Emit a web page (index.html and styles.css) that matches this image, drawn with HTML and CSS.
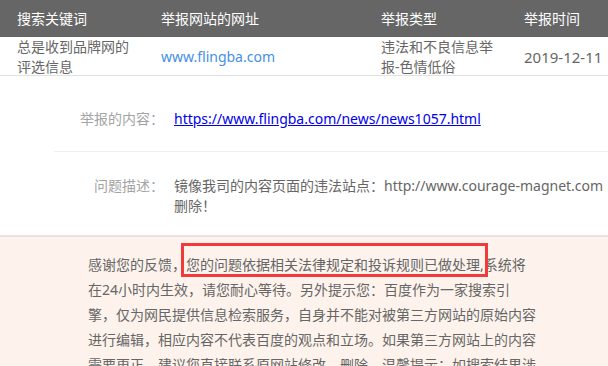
FILE: index.html
```html
<!DOCTYPE html>
<html lang="zh-CN">
<head>
    <meta charset="UTF-8">
    <meta name="viewport" content="width=device-width, initial-scale=1.0">
    <title>举报详情</title>
    <link rel="stylesheet" href="styles.css">
</head>
<body>

<div class="table-head">
    <div class="cell">搜索关键词</div>
    <div class="cell">举报网站的网址</div>
    <div class="cell">举报类型</div>
    <div class="cell">举报时间</div>
</div>

<div class="table-row">
    <div class="cell">总是收到品牌网的评选信息</div>
    <div class="cell site">www.flingba.com</div>
    <div class="cell">违法和不良信息举报-色情低俗</div>
    <div class="cell date">2019-12-11</div>
</div>

<div class="detail">
    <div class="detail-row first">
        <div class="label">举报的内容：</div>
        <div class="value"><a href="#">https://www.flingba.com/news/news1057.html</a></div>
    </div>
    <div class="detail-row second">
        <div class="label">问题描述：</div>
        <div class="value">镜像我司的内容页面的违法站点：<span class="nowrap">http://www.courage-magnet.com</span> 删除！</div>
    </div>
</div>

<div class="reply">
    <p>感谢您的反馈，<span class="mark">您的问题依据相关法律规定和投诉规则已做处理</span>,系统将在24小时内生效，请您耐心等待。另外提示您：百度作为一家搜索引擎，仅为网民提供信息检索服务，自身并不能对被第三方网站的原始内容进行编辑，相应内容不代表百度的观点和立场。如果第三方网站上的内容需要更正，建议您直接联系原网站修改，删除。温馨提示：如搜索结果涉及您的合法权益，请您通过百度投诉中心进行投诉。</p>
</div>

</body>
</html>
```

FILE: styles.css
```css
html, body {
    overflow: hidden;
}
body {
    font-family: "Noto Sans", "Noto Sans CJK JP", sans-serif;
    font-size: 14px;
    color: #666;
    background-color: #fff;
    margin: 0;
    padding: 0;
    width: 608px;
}
.table-head,
.table-row {
    display: grid;
    grid-template-columns: 144px 220px 143px 1fr;
}
.table-head {
    height: 37px;
    align-items: center;
    background-color: #666;
    color: #fff;
}
.cell {
    padding: 0 8px 0 17px;
    line-height: 20px;
}
.table-row {
    height: 38px;
    align-items: center;
    border-bottom: 1px solid #e2e2e2;
}
.table-row .site {
    color: #4590e6;
}
.table-row .date {
    font-size: 15px;
    white-space: nowrap;
    padding-right: 0;
}
.detail-row {
    display: flex;
    line-height: 20px;
}
.detail-row.first {
    padding: 33px 0 22px;
    margin-left: 54px;
    border-bottom: 1px solid #eee;
}
.detail-row.first .label {
    width: 110px;
}
.detail-row.second {
    padding: 24px 0 19px;
    border-bottom: 2px solid #e3e3e3;
}
.label {
    width: 164px;
    flex-shrink: 0;
    text-align: right;
    color: #a3a3a3;
}
.value {
    width: 434px;
    margin-left: 10px;
    flex-shrink: 0;
}
.value a {
    color: #0000ee;
    text-decoration: underline;
}
.nowrap {
    white-space: nowrap;
}
.reply {
    background-color: #fdf3ec;
    padding: 15px 0 40px;
}
.reply p {
    margin: 0 0 0 88px;
    width: 449px;
    line-height: 25px;
    color: #666;
}
.mark {
    position: relative;
}
.mark::after {
    content: "";
    position: absolute;
    left: -5px;
    right: -8px;
    top: -12px;
    bottom: -3px;
    border: 3px solid #f23a3a;
}
```
